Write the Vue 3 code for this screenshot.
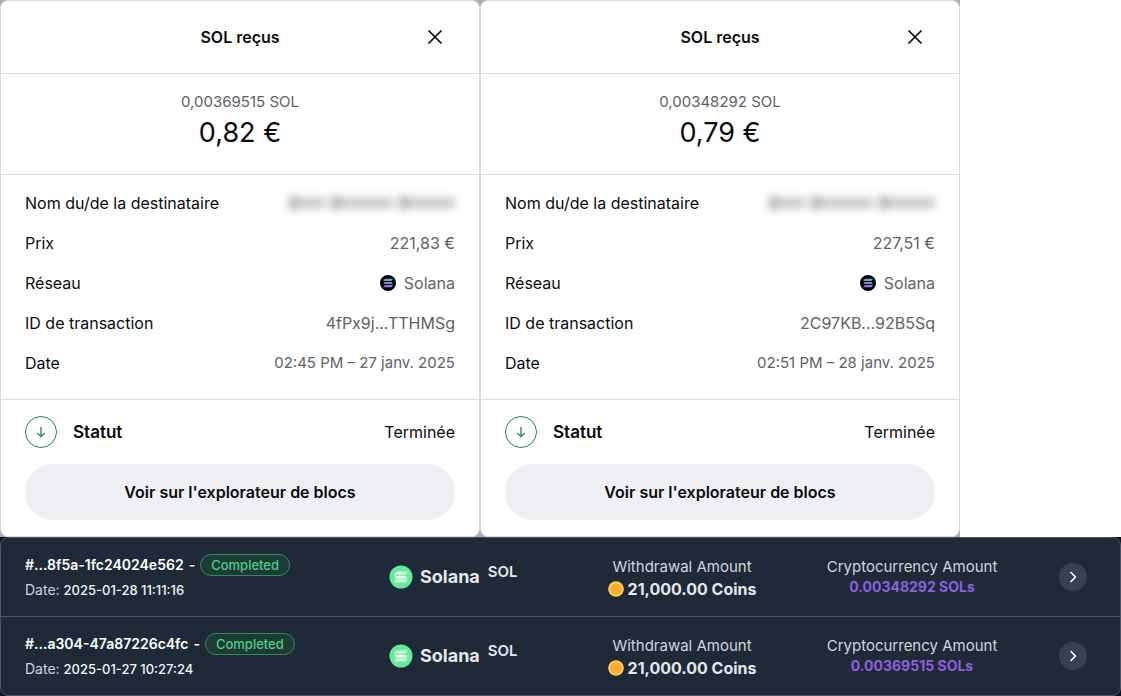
<script setup>
const receipts = [
  {
    id: 'first',
    amount: '0,00369515 SOL',
    value: '0,82 €',
    price: '221,83 €',
    transaction: '4fPx9j...TTHMSg',
    date: '02:45 PM – 27 janv. 2025',
  },
  {
    id: 'second',
    amount: '0,00348292 SOL',
    value: '0,79 €',
    price: '227,51 €',
    transaction: '2C97KB...92B5Sq',
    date: '02:51 PM – 28 janv. 2025',
  },
]

const withdrawals = [
  { id: '#...8f5a-1fc24024e562', date: '2025-01-28 11:11:16', crypto: '0.00348292 SOLs' },
  { id: '#...a304-47a87226c4fc', date: '2025-01-27 10:27:24', crypto: '0.00369515 SOLs' },
]
</script>

<template>
  <main class="page">
    <section class="receipts">
      <div v-for="r in receipts" :key="r.id" class="backdrop">
        <article class="card">
          <header class="card-head">
            <h2>SOL reçus</h2>
            <button class="close" type="button" aria-label="Fermer">
              <svg width="16" height="16" viewBox="0 0 16 16" fill="none" stroke="#0a0b0d" stroke-width="1.7">
                <path d="M1.5 1.5l13 13M14.5 1.5l-13 13" />
              </svg>
            </button>
          </header>
          <div class="summary">
            <p class="amount">{{ r.amount }}</p>
            <p class="value">{{ r.value }}</p>
          </div>
          <dl class="details">
            <div class="line">
              <dt>Nom du/de la destinataire</dt>
              <dd class="hidden-name">
                <i class="cap"></i><i class="w1"></i><i class="cap second"></i><i class="w2"></i><i class="cap second"></i><i class="w3"></i>
              </dd>
            </div>
            <div class="line"><dt>Prix</dt><dd>{{ r.price }}</dd></div>
            <div class="line">
              <dt>Réseau</dt>
              <dd class="network">
                <svg width="16" height="16" viewBox="0 0 16 16">
                  <defs>
                    <linearGradient :id="'sol-' + r.id" x1="4" y1="12" x2="12" y2="4" gradientUnits="userSpaceOnUse">
                      <stop offset="0" stop-color="#9b55ed" />
                      <stop offset="0.5" stop-color="#7896d8" />
                      <stop offset="1" stop-color="#35d8ae" />
                    </linearGradient>
                  </defs>
                  <circle cx="8" cy="8" r="8" fill="#050509" />
                  <path
                    :fill="'url(#sol-' + r.id + ')'"
                    d="M5 3.7h8l-1.8 2.2H3.2zM3.2 6.9h8L13 9.1H5zM5 10.1h8l-1.8 2.2H3.2z"
                  />
                </svg>
                Solana
              </dd>
            </div>
            <div class="line"><dt>ID de transaction</dt><dd>{{ r.transaction }}</dd></div>
            <div class="line"><dt>Date</dt><dd class="date">{{ r.date }}</dd></div>
          </dl>
          <footer class="card-foot">
            <div class="status">
              <svg width="32" height="32" viewBox="0 0 32 32" fill="none" stroke="#25805c">
                <circle cx="16" cy="16" r="15.5" />
                <path d="M16 11v9.5M12.2 16.9l3.8 3.8 3.8-3.8" stroke-width="1.3" />
              </svg>
              <strong>Statut</strong>
              <span>Terminée</span>
            </div>
            <button class="explorer" type="button">Voir sur l'explorateur de blocs</button>
          </footer>
        </article>
      </div>
    </section>

    <section class="panel-back">
      <ul class="panel">
        <li v-for="w in withdrawals" :key="w.id" class="entry">
          <div class="ident">
            <div class="ident-top">
              <strong>{{ w.id }}</strong><strong>-</strong>
              <span class="badge">Completed</span>
            </div>
            <p class="when">Date: <b>{{ w.date }}</b></p>
          </div>
          <div class="coin">
            <svg width="24" height="24" viewBox="0 0 24 24">
              <circle cx="12" cy="12" r="11.5" fill="#62ed9a" />
              <path
                fill="#e3fff0"
                d="M7.2 6.6h11.4l-1.8 3H5.2zM5.2 10.7h11.4l2 2.8H7.2zM7.2 14.6h11.4l-1.8 3H5.2z"
              />
            </svg>
            <span class="coin-name">Solana</span>
            <span class="ticker">SOL</span>
          </div>
          <div class="figure">
            <span class="label">Withdrawal Amount</span>
            <span class="coins">
              <svg width="16" height="16" viewBox="0 0 16 16">
                <circle cx="8" cy="8" r="7.8" fill="#fbd84b" />
                <circle cx="8" cy="8" r="6" fill="#fbac35" />
              </svg>
              21,000.00 Coins
            </span>
          </div>
          <div class="figure">
            <span class="label">Cryptocurrency Amount</span>
            <span class="crypto">{{ w.crypto }}</span>
          </div>
          <button class="open" type="button" aria-label="Details">
            <svg width="12" height="12" viewBox="0 0 12 12" fill="none" stroke="#fff" stroke-width="1.6">
              <path d="M4 1.5L8.5 6 4 10.5" stroke-linecap="round" stroke-linejoin="round" />
            </svg>
          </button>
        </li>
      </ul>
    </section>
  </main>
</template>

<style>
body {
  background: #fff;
}
</style>

<style scoped>
* {
  box-sizing: border-box;
}
h2,
p,
dl,
dd,
ul {
  margin: 0;
  padding: 0;
}
svg {
  display: block;
  flex: none;
}
button {
  border: 0;
  padding: 0;
  font: inherit;
  cursor: pointer;
}
.page {
  font-family: Inter, 'Liberation Sans', sans-serif;
  font-size: 16px;
  line-height: 24px;
  color: #0a0b0d;
}
.receipts {
  display: grid;
  grid-template-columns: repeat(2, minmax(0, 480px));
}
.backdrop {
  background: #adadad;
}
.card {
  background: #fff;
  border: 1px solid #dcdcdc;
  border-radius: 8px;
}
.card-head {
  display: grid;
  grid-template-columns: 1fr auto 1fr;
  align-items: center;
  height: 73px;
  padding: 0 36px;
  border-bottom: 1px solid #dedede;
}
.card-head h2 {
  grid-column: 2;
  font-size: 16px;
  font-weight: 600;
}
.close {
  justify-self: end;
  background: none;
}
.summary {
  height: 101px;
  padding-top: 16px;
  text-align: center;
  border-bottom: 1px solid #dedede;
}
.amount {
  color: #5f6166;
  font-size: 15px;
}
.value {
  font-size: 27px;
  line-height: 38px;
}
.details {
  padding: 8px 24px 16px;
  border-bottom: 1px solid #dedede;
}
.line {
  display: flex;
  justify-content: space-between;
  align-items: center;
  height: 40px;
}
.line dd {
  color: #5f6166;
}
.line .date {
  font-size: 15px;
}
.network {
  display: flex;
  align-items: center;
  gap: 8px;
}
.hidden-name {
  display: flex;
  align-items: center;
  filter: blur(4px);
}
.hidden-name i {
  height: 10px;
  background: #c2c3c7;
}
.hidden-name .cap {
  width: 8px;
  height: 14px;
  background: #b2b3b7;
}
.hidden-name .second {
  margin-left: 6px;
}
.w1 {
  width: 28px;
}
.w2 {
  width: 54px;
}
.w3 {
  width: 48px;
}
.card-foot {
  padding: 16px 24px;
}
.status {
  display: flex;
  align-items: center;
  gap: 16px;
  margin-bottom: 16px;
}
.status strong {
  flex: 1;
  font-size: 17px;
  font-weight: 600;
}
.explorer {
  width: 100%;
  height: 56px;
  border-radius: 28px;
  background: #eeeff3;
  color: #0a0b0d;
  font-weight: 600;
}
.panel-back {
  background: #0e1522;
}
.panel {
  list-style: none;
  background: #202937;
  border: 1px solid #4b5563;
  border-radius: 8px;
  color: #e5e7eb;
  font-size: 14px;
  line-height: 20px;
}
.entry {
  display: grid;
  grid-template-columns: 364fr 178fr 230fr 230fr 60fr;
  align-items: center;
  height: 78px;
  padding: 0 33px 0 24px;
}
.entry + .entry {
  height: 79px;
  border-top: 1px solid #4b5563;
}
.ident-top {
  display: flex;
  align-items: center;
  gap: 5px;
  height: 22px;
  color: #fff;
}
.ident-top strong {
  font-weight: 600;
}
.badge {
  height: 22px;
  padding: 0 10px;
  border: 1px solid #2f8f5a;
  border-radius: 11px;
  background: #1d3a37;
  color: #4fcf80;
  font-size: 13px;
  font-weight: 500;
}
.when {
  margin-top: 4px;
  color: #d1d5db;
}
.when b {
  color: #f3f4f6;
  font-size: 13px;
  font-weight: 500;
}
.coin {
  display: flex;
  align-items: center;
}
.coin-name {
  margin: 0 8px 0 7px;
  font-size: 18px;
  font-weight: 700;
}
.ticker {
  padding-bottom: 10px;
  font-size: 15px;
  font-weight: 600;
}
.figure {
  display: flex;
  flex-direction: column;
  align-items: center;
  align-self: start;
  padding-top: 19px;
}
.label {
  color: #d1d5db;
  font-size: 15px;
}
.coins {
  display: flex;
  align-items: center;
  gap: 4px;
  height: 24px;
  font-size: 16px;
  font-weight: 700;
}
.crypto {
  color: #8b62dd;
  font-weight: 700;
}
.open {
  display: flex;
  align-items: center;
  justify-content: center;
  justify-self: end;
  width: 28px;
  height: 28px;
  border-radius: 50%;
  background: #374151;
}
</style>
